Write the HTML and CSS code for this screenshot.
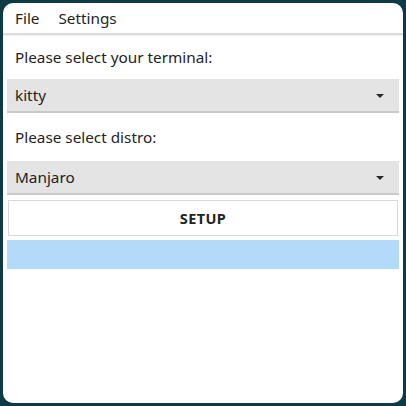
FILE: index.html
```html
<!DOCTYPE html>
<html>
<head>
<meta charset="utf-8">
<link rel="stylesheet" href="styles.css">
</head>
<body>
<div class="window">
  <div class="menubar">
    <span class="menu-item">File</span>
    <span class="menu-item">Settings</span>
  </div>
  <div class="content">
    <div class="label first">Please select your terminal:</div>
    <div class="combo">
      <span>kitty</span>
      <span class="arrow"></span>
    </div>
    <div class="label second">Please select distro:</div>
    <div class="combo">
      <span>Manjaro</span>
      <span class="arrow"></span>
    </div>
    <div class="button">SETUP</div>
    <div class="progress"></div>
  </div>
</div>
</body>
</html>
```
FILE: styles.css
```css
html, body {
  margin: 0;
  padding: 0;
  background: #0e3a46;
  width: 406px;
  height: 406px;
  overflow: hidden;
}
.window {
  margin: 3px;
  width: 400px;
  height: 400px;
  background: #ffffff;
  border-radius: 10px;
  overflow: hidden;
  font-family: "Noto Sans", "Open Sans", sans-serif;
  font-size: 15.3px;
  color: #232323;
  display: flex;
  flex-direction: column;
}
.menubar {
  height: 30px;
  display: flex;
  align-items: center;
  gap: 19px;
  padding-left: 12px;
  flex-shrink: 0;
  border-bottom: 2px solid #dcdcdc;
  box-shadow: 0 1px 1px rgba(0,0,0,0.05);
}
.content {
  display: flex;
  flex-direction: column;
  padding: 0 4px 0 4px;
}
.label {
  display: flex;
  align-items: center;
  padding-left: 8px;
}
.label.first { height: 44px; }
.label.second { height: 48px; }
.combo {
  height: 32px;
  background: #e4e4e4;
  border-bottom: 2px solid #c9c9c9;
  display: flex;
  align-items: center;
  justify-content: space-between;
  padding: 0 15px 0 8px;
}
.arrow {
  width: 0;
  height: 0;
  border-left: 4px solid transparent;
  border-right: 4px solid transparent;
  border-top: 4px solid #2a2a2a;
  margin-top: 1px;
}
.button {
  margin: 5px 1px 0 1px;
  height: 34px;
  border: 1px solid #d9d9d9;
  display: flex;
  align-items: center;
  justify-content: center;
  font-weight: bold;
  font-size: 14.5px;
  letter-spacing: 0.4px;
}
.progress {
  margin-top: 4px;
  height: 29px;
  background: #b3dbf9;
}
```
